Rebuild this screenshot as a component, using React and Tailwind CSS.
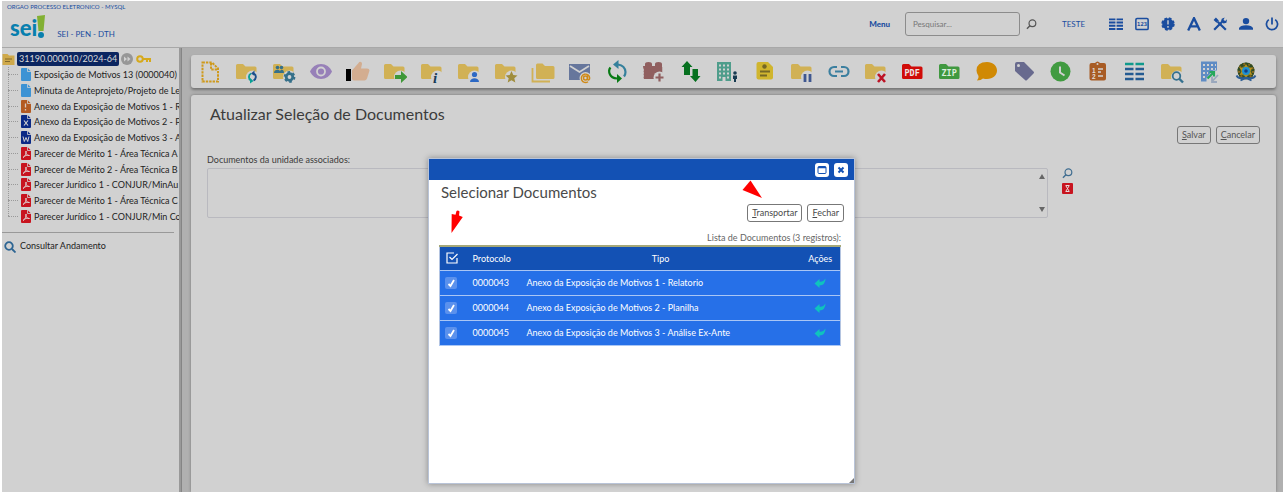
import React from "react";

const FOLDER = "M1 5.5Q1 4 2.500 4H8l2.500 2.500h9.500q1.500 0 1.500 1.500v9.500q0 1.500-1.500 1.500H2.500Q1 19 1 17.500z";

function Svg({ size = 24, children }) {
  return (
    <svg viewBox="0 0 24 24" width={size} height={size} aria-hidden="true" className="block shrink-0" fill="none">
      {children}
    </svg>
  );
}

function Folder({ children }) {
  return (
    <Svg>
      <path d={FOLDER} fill="#d1b155" />
      <circle cx="17.500" cy="17" r="6.500" fill="#d1d1d1" />
      {children}
    </Svg>
  );
}

function Brazil() {
  return (
    <Svg>
      <path d="M12 2.500 18 4.500l2.500 5-2 8h-13l-2-8L6 4.500z" fill="#5c6a2c" />
      <circle cx="12" cy="11" r="7" stroke="#2f4a24" strokeWidth="3" />
      <circle cx="12" cy="11" r="7" stroke="#8a6a1c" strokeWidth="2" strokeDasharray="2 3" />
      <path d="M12 4l2.200 3.800 4.300-.3-2.200 3.700 2.200 3.800-4.300-.4L12 18.500l-2.200-3.900-4.300.4 2.200-3.800-2.200-3.700 4.300.3z" fill="#b8921c" />
      <circle cx="12" cy="11" r="4" fill="#1f8fd0" />
      <circle cx="12" cy="11" r="1.800" fill="#123f86" />
      <path d="M2.500 15.500c2 4 6 3 9.500 2 3.500 1 7.500 2 9.500-2M6.500 20.500l5.500-2.500 5.500 2.500" stroke="#2c5c94" strokeWidth="1.800" />
    </Svg>
  );
}

const tools = [
  ["Incluir Documento", <Svg><path d="M4.500 2.500H14l6 6V21.500H4.500zM13 3v6.500h6.500" stroke="#cf9a1c" strokeWidth="2" strokeDasharray="2.400 1" /></Svg>],
  ["Iniciar Processo Relacionado", <Folder><path d="M16 13.500a4 4 0 0 0 0 7" stroke="#0aa095" strokeWidth="1.900" /><path d="m15 18 3.500 3L15 23.500z" fill="#0aa095" /><path d="M18.500 20.500a4 4 0 0 0 .5-7" stroke="#1c4f8c" strokeWidth="1.900" /><path d="M19.500 10.500v5.500L16 13.500z" fill="#1c4f8c" /></Folder>],
  ["Gerenciar Processo", <Folder><circle cx="5.500" cy="7.500" r="1.800" fill="#35708a" /><circle cx="9.500" cy="7.500" r="1.800" fill="#35708a" /><path d="M2 13c0-4 5-4 6-2 1-2 4-2 4 2z" fill="#35708a" /><circle cx="17.500" cy="17" r="3.300" stroke="#35708a" strokeWidth="2.800" /><circle cx="17.500" cy="17" r="5" stroke="#35708a" strokeWidth="1.800" strokeDasharray="2.600 2.636" /></Folder>],
  ["Acompanhamento", <Svg><path d="M1 11.500C3 7 7 4 12 4s9 3 11 7.500C21 16 17 19 12 19S3 16 1 11.500z" fill="#9780b8" /><circle cx="12" cy="11.500" r="4" stroke="#d1d1d1" strokeWidth="1.800" /></Svg>],
  ["Ciência", <Svg><path d="M0 9h5v12H0z" fill="#000" /><path d="M6 10.500 12.500 3c1-2 3.500-1.500 3.500 1l-1 4.500h6q2.500 0 2.500 2l-2.500 8q-.7 2-2.500 2H8q-2 0-2-2z" fill="#d3ad90" /></Svg>],
  ["Enviar Processo", <Folder><path d="M12 15h6v-4l6.500 6-6.500 6v-4h-6z" fill="#3f9838" /></Folder>],
  ["Atualizar Andamento", <Folder><text x="13" y="22.500" fontFamily="Liberation Serif, serif" fontSize="15" fontWeight="bold" fontStyle="italic" fill="#173a56">i</text></Folder>],
  ["Atribuir Processo", <Folder><circle cx="17.500" cy="14.500" r="2.600" fill="#2c68c4" /><path d="M13 22c0-5 9-5 9 0z" fill="#2c68c4" /></Folder>],
  ["Acompanhamento Especial", <Folder><path d="m17.500 11 1.800 4 4.200.4-3.200 2.900 1 4.200-3.800-2.200-3.800 2.200 1-4.200-3.200-2.900 4.200-.4z" fill="#a08d3c" /></Folder>],
  ["Duplicar Processo", <Svg><path d="M1.500 8v13.500H19" stroke="#d1b155" strokeWidth="1.800" /><path d="M5 5q0-1.500 1.500-1.500h5l2.500 2.500h8q1.500 0 1.500 1.500v10q0 1.500-1.500 1.500h-15.500q-1.500 0-1.500-1.500z" fill="#d1b155" /></Svg>],
  ["Enviar Correspondência", <Svg><path d="M1 4h21v16H1z" fill="#66769c" /><path d="m2 6 9.500 6L21 6" stroke="#d1d1d1" strokeWidth="1.800" /><circle cx="17.500" cy="18" r="6" fill="#d1d1d1" /><circle cx="17.500" cy="18" r="2" stroke="#d08a18" strokeWidth="1.500" /><path d="M19.500 15.500v3q0 1.500 1.200 1.500 1-.2 1-2a4.200 4.200 0 1 0-1.700 3.700" stroke="#d08a18" strokeWidth="1.400" /></Svg>],
  ["Relacionamentos", <Svg><path d="M13 4.500q7 1 7.500 7.500 0 2.500-1.500 4.500" stroke="#35809c" strokeWidth="2.200" /><path d="M13.500 0v9L8 4.500z" fill="#35809c" /><path d="M5.500 7.500q-2.500 3-.5 7 1.500 3.500 7 4" stroke="#087a14" strokeWidth="2.200" /><path d="M12 14v9l5-4.500z" fill="#087a14" /></Svg>],
  ["Incluir em Bloco", <Svg><path d="M1 6h2V4q0-2 3.500-2T10 4v2h3V4q0-2 3.500-2T20 4v3q1 1 0 2 1 1 0 2 1 1 0 2v6H2q-1-2 0-3-1-2 0-3-1-2 0-3-1-2-1-4z" fill="#905f5f" /><circle cx="17.500" cy="17.500" r="6" fill="#d1d1d1" /><path d="M17.500 13.500v8M13.500 17.500h8" stroke="#905f5f" strokeWidth="2.200" /></Svg>],
  ["Tramitar", <Svg><path d="m8 1 5.500 6H11v8H5V7H2.500zM16.500 22 11 16h2.500V9h5.500v7h2.500z" fill="#06701f" /></Svg>],
  ["Ver Órgãos", <Svg><path d="M1 2h14v19H1z" fill="#4f9d8b" /><path d="M3 5.500h10M3 9.500h10M3 13.500h10M3 17.500h2M11 17.500h2" stroke="#d1d1d1" strokeWidth="2" strokeDasharray="2 2" /><path d="M6.500 17h3v4h-3z" fill="#d1d1d1" /><circle cx="19" cy="13" r="1.800" fill="#173a50" /><path d="M17 15.500h4V19h-1v3h-2v-3h-1z" fill="#173a50" /></Svg>],
  ["Anotações", <Svg><path d="M3.500 4q0-2 2-2H15l5 5v10.500q0 2-2 2H5.500q-2 0-2-2z" fill="#d0b52e" /><circle cx="11.500" cy="6.500" r="2.200" fill="#746726" /><path d="M7 11.500h10M7 15.500h7" stroke="#746726" strokeWidth="1.800" /></Svg>],
  ["Sobrestar Processo", <Folder><path d="M15 14v8M20 14v8" stroke="#3f5790" strokeWidth="2.800" /></Folder>],
  ["Anexar Processo", <Svg><path d="M10 7H7a4.500 4.500 0 0 0 0 9h3M14 7h3a4.500 4.500 0 0 1 0 9h-3M8 11.500h8" stroke="#3b7f9f" strokeWidth="2.200" /></Svg>],
  ["Concluir Processo", <Folder><path d="m14 14 7 8M21 14l-7 8" stroke="#bd1426" strokeWidth="2.600" /></Folder>],
  ["Gerar PDF", <Svg><path d={FOLDER} fill="#d00b08" /><text x="3.500" y="15.500" fontFamily="DejaVu Sans Mono, monospace" fontSize="8.500" fontWeight="bold" fill="#ece4e4">PDF</text></Svg>],
  ["Gerar ZIP", <Svg><path d={FOLDER} fill="#409840" /><text x="3.500" y="15.500" fontFamily="DejaVu Sans Mono, monospace" fontSize="8.500" fontWeight="bold" fill="#dcecdc">ZIP</text></Svg>],
  ["Comentários", <Svg><path d="M12 2c6 0 10 4 10 8.500S18 19 12 19q-2 0-4-.6Q6 20.500 2 20.500q2-2 1.500-4.500Q1.500 13 1.500 10.500 1.500 2 12 2z" fill="#d08904" /></Svg>],
  ["Marcadores", <Svg><path d="M3 4q0-2 2-2h7l9.500 9.500q1 1 0 2L15 20q-1 1-2 0L3 11z" fill="#686a8e" /><circle cx="6.500" cy="5.500" r="1.500" fill="#d1d1d1" /></Svg>],
  ["Controle de Prazos", <Svg><circle cx="11.500" cy="11.500" r="10" fill="#419b41" /><path d="M11 6.500v6l4.500 3" stroke="#d1d1d1" strokeWidth="2" /></Svg>],
  ["Lista de Tarefas", <Svg><path d="M3.500 5q0-2 2-2H9q2.500-3 5 0h4q2 0 2 2v13.500q0 2-2 2H5.500q-2 0-2-2z" fill="#a85c25" /><circle cx="11.500" cy="4" r="1" fill="#d1d1d1" /><path d="M12 9h5M12 12h3M12 16h5" stroke="#d1d1d1" strokeWidth="1.500" /><text x="6" y="12.500" fontFamily="Liberation Sans, sans-serif" fontSize="6.500" fontWeight="bold" fill="#e4dcd6">1</text><text x="6" y="18.500" fontFamily="Liberation Sans, sans-serif" fontSize="6.500" fontWeight="bold" fill="#e4dcd6">2</text></Svg>],
  ["Controle de Processos", <Svg><path d="M2 4h8.500M12.500 4H21" stroke="#109a8d" strokeWidth="2.600" /><path d="M2 9h8.500M12.500 9H21M2 14h8.500M12.500 14H21M2 19h8.500M12.500 19H21" stroke="#245b92" strokeWidth="2.600" /></Svg>],
  ["Pesquisar no Processo", <Folder><circle cx="16.500" cy="16" r="3.800" stroke="#35718f" strokeWidth="1.800" /><path d="m19 18.500 4 4" stroke="#35718f" strokeWidth="2.400" /></Folder>],
  ["Envio Externo", <Svg><path d="M4 1.500h16v20H4z" fill="#5f8cc4" /><path d="M6 5h13M6 9h13M6 13h5M6 17h3" stroke="#d1d1d1" strokeWidth="2" strokeDasharray="2 2" /><path d="M9.500 22V18L16 10.500h8V22z" fill="#d1d1d1" /><path d="m10.500 18.500 6-6M12.500 12h4.500v4.500" stroke="#25a85c" strokeWidth="2.200" /><path d="m21 15-5.500 6M15 16.500V22h5" stroke="#9aa8bd" strokeWidth="1.800" /></Svg>],
  ["Brasão da República", <Brazil />],
];

const documents = [
  ["Exposição de Motivos 13 (0000040)", "doc"],
  ["Minuta de Anteprojeto/Projeto de Le", "doc"],
  ["Anexo da Exposição de Motivos 1 - R", "alert"],
  ["Anexo da Exposição de Motivos 2 - P", "sheet"],
  ["Anexo da Exposição de Motivos 3 - A", "word"],
  ["Parecer de Mérito 1 - Área Técnica A", "pdf"],
  ["Parecer de Mérito 2 - Área Técnica B", "pdf"],
  ["Parecer Jurídico 1 - CONJUR/MinAu", "pdf"],
  ["Parecer de Mérito 1 - Área Técnica C", "pdf"],
  ["Parecer Jurídico 1 - CONJUR/Min Co", "pdf"],
];

const docColors = { doc: "#3d93d4", alert: "#b35a22", sheet: "#0b2a86", word: "#0b2a86", pdf: "#c8141f" };

function DocIcon({ kind }) {
  return (
    <svg viewBox="0 0 10 13" className="block h-[13px] w-[10px] shrink-0" fill="none" aria-hidden="true">
      <path d="M0 1q0-1 1-1h5.500L10 3.500V12q0 1-1 1H1q-1 0-1-1z" fill={docColors[kind]} />
      <path d="M6.500 0v3.500H10" stroke="#d1d1d1" strokeWidth=".8" />
      {kind === "alert" && <path d="M4.500 3.500v4M4.500 9v1.500" stroke="#d8c8c0" strokeWidth="1.300" />}
      {kind === "sheet" && <path d="m3 5.500 4 5M7 5.500l-4 5" stroke="#d1d1d1" strokeWidth="1.200" />}
      {kind === "word" && <path d="m2 5.500 1.300 5L5 6.500l1.700 4 1.300-5" stroke="#d1d1d1" />}
      {kind === "pdf" && <path d="M2 10.500c2-1 3.500-4 3-6.500-.8 3 1.500 4.800 3.500 4.500C6 7.800 4 8.500 2 10.500z" stroke="#e0d0d0" strokeWidth=".9" />}
    </svg>
  );
}

function Magnifier({ className }) {
  return (
    <svg viewBox="0 0 12 12" className={className} fill="none" stroke="currentColor" aria-hidden="true">
      <circle cx="7" cy="4.700" r="3.700" strokeWidth="1.300" />
      <path d="M4.300 7.300 1 10.700" strokeWidth="1.500" />
    </svg>
  );
}

const headerActions = [
  ["Controle de Processos", <Svg size={14}><path d="M0 4h11M13 4h11M0 9.500h11M13 9.500h11M0 15h11M13 15h11M0 20.500h11M13 20.500h11" stroke="currentColor" strokeWidth="3.200" /></Svg>],
  ["Painel de Controle", <Svg size={14}><rect x="1.500" y="2.500" width="21" height="19" rx="2" stroke="currentColor" strokeWidth="2.600" /><text x="3.600" y="16" fontFamily="DejaVu Sans Mono, monospace" fontSize="9.500" fontWeight="bold" fill="currentColor">123</text></Svg>],
  ["Novidades", <Svg size={14}><circle cx="12" cy="12" r="10" fill="currentColor" /><circle cx="12" cy="12" r="9.500" stroke="currentColor" strokeWidth="4" strokeDasharray="4.500 3" /><path d="M12 5.500v7.500M12 15.500v3" stroke="#d1d1d1" strokeWidth="2.400" /></Svg>],
  ["Acessibilidade", <Svg size={14}><path d="M2 23 12 2l10 21M6 16h12" stroke="currentColor" strokeWidth="4" /></Svg>],
  ["Configurações", <Svg size={14}><path d="m2 22 15-15M8 8l14 14" stroke="currentColor" strokeWidth="3.800" /><path d="M1 5 5 1l5 5-4 4zM15 3l5-2-2 4 3 2 3-3-1 6-5 1-4-4z" fill="currentColor" /></Svg>],
  ["Usuário", <Svg size={14}><circle cx="12" cy="7" r="5.500" fill="currentColor" /><path d="M0 22v-3q2-5 12-5t12 5v3z" fill="currentColor" /></Svg>],
  ["Sair", <Svg size={14}><path d="M12 1v12" stroke="currentColor" strokeWidth="3" /><path d="M6.500 4.500a9.500 9.500 0 1 0 11 0" stroke="currentColor" strokeWidth="3" /></Svg>],
];

const rows = [
  ["0000043", "Anexo da Exposição de Motivos 1 - Relatorio"],
  ["0000044", "Anexo da Exposição de Motivos 2 - Planilha"],
  ["0000045", "Anexo da Exposição de Motivos 3 - Análise Ex-Ante"],
];

function TextButton({ label, className }) {
  return (
    <button type="button" className={`rounded-[3px] border border-[#777] px-1 text-[9px] leading-4 ${className}`}>
      <span className="underline">{label[0]}</span>{label.slice(1)}
    </button>
  );
}

function Header() {
  return (
    <header className="flex h-[47px] justify-between border-b border-[#a8a8a8] bg-[#d1d1d1] pr-1 text-[#1a4d9f]">
      <div className="pl-[5px] pt-px">
        <p className="text-[6px] leading-[10px]">ORGAO PROCESSO ELETRONICO - MYSQL</p>
        <div className="flex items-end pl-[3px] pt-[3px]">
          <div className="flex items-end">
            <span className="text-[22px] font-black leading-[22px] text-[#087fae]">sei</span>
            <svg viewBox="0 0 8 24" className="h-6 w-2" aria-hidden="true">
              <path d="M0 1 8 0 6.500 16H1.500z" fill="#82b033" />
              <circle cx="4" cy="20" r="3" fill="#087fae" />
            </svg>
          </div>
          <span className="pl-3 text-[8px] leading-[10px]">SEI - PEN - DTH</span>
        </div>
      </div>
      <div className="flex items-center">
        <a href="#menu" className="mr-[15px] text-[8px] font-black">Menu</a>
        <input aria-label="Pesquisar" placeholder="Pesquisar..." className="h-6 w-[115px] rounded-[3px] border border-[#8c8c8c] bg-transparent px-[7px] text-[8px] placeholder:text-[#777]" />
        <button type="button" aria-label="Pesquisar" className="ml-[6px] text-[#555]"><Magnifier className="size-[11px]" /></button>
        <span className="ml-[25px] w-[47px] text-[8px]">TESTE</span>
        <nav className="flex gap-3">
          {headerActions.map(([name, icon]) => (
            <button type="button" key={name} aria-label={name}>{icon}</button>
          ))}
        </nav>
      </div>
    </header>
  );
}

function Sidebar() {
  return (
    <aside className="w-[177px] shrink-0 overflow-hidden bg-[#d1d1d1] pt-[3px] text-[9px] text-[#222]">
      <div className="flex h-4 items-center">
        <svg viewBox="0 0 12 12" className="h-3 w-[13px]" aria-hidden="true">
          <path d="M0 1h5l1.500 1.500H12V12H0z" fill="#cfa94a" />
          <path d="M2.500 6h7M2.500 8.500h5" stroke="#82692b" />
        </svg>
        <a href="#processo" className="ml-[2px] rounded-[2px] bg-[#0b2560] px-[2px] leading-[14px] text-[#d8d8d8]">31190.000010/2024-64</a>
        <svg viewBox="0 0 12 12" className="ml-[2px] size-3" aria-hidden="true">
          <circle cx="6" cy="6" r="6" fill="#979797" />
          <path d="m3 3.500 3 2.500-3 2.500zM6.500 3.500l3 2.500-3 2.500z" fill="#d1d1d1" />
        </svg>
        <svg viewBox="0 0 15 10" className="ml-[3px] h-[10px] w-[15px]" fill="none" stroke="#d6a91b" strokeWidth="2" aria-hidden="true">
          <circle cx="4" cy="5" r="2.800" />
          <path d="M7 5h7v3M11 5v3" />
        </svg>
      </div>
      <ul className="relative ml-[6px] grid h-[157px] auto-rows-fr">
        <li aria-hidden="true" className="absolute bottom-2 left-0 top-0 border-l border-dotted border-[#999]" />
        {documents.map(([name, kind]) => (
          <li key={name + kind} className="flex items-center whitespace-nowrap">
            <span className="mr-[3px] w-[10px] shrink-0 border-t border-dotted border-[#999]" />
            <DocIcon kind={kind} />
            <a href="#documento" className="pl-[3px] leading-[15px]">{name}</a>
          </li>
        ))}
      </ul>
      <hr className="mr-[5px] mt-2 border-[#999]" />
      <a href="#andamento" className="mt-[5px] flex items-center gap-1 pl-[2px] leading-[14px]">
        <svg viewBox="0 0 12 12" className="mt-[3px] size-3" fill="none" stroke="#2d6593" strokeWidth="1.800" aria-hidden="true">
          <circle cx="5" cy="5" r="3.800" /><path d="m8 8 3.500 3.500" />
        </svg>
        Consultar Andamento
      </a>
    </aside>
  );
}

function Dialog() {
  return (
    <section role="dialog" aria-label="Selecionar Documentos" className="absolute left-1/3 top-[157px] -ml-px flex h-[326px] w-[427px] flex-col border border-[#b9c4d8] bg-white text-[#4a4a4a] shadow-[0_0_6px_rgba(0,0,0,0.35)]">
      <div className="flex h-[21px] items-center justify-end gap-[5px] bg-[#1351b4] pr-[6px]">
        <button type="button" aria-label="Maximizar" className="rounded-[3px] bg-white text-[#1351b4]">
          <svg viewBox="0 0 14 14" className="size-[14px]" fill="none" stroke="currentColor" aria-hidden="true"><rect x="3" y="3.500" width="8" height="7" rx="1" /><path d="M3 4.500h8" strokeWidth="1.500" /></svg>
        </button>
        <button type="button" aria-label="Fechar janela" className="rounded-[3px] bg-white text-[#1351b4]">
          <svg viewBox="0 0 14 14" className="size-[14px]" stroke="currentColor" strokeWidth="2" aria-hidden="true"><path d="m4.500 4.500 5 5M9.500 4.500l-5 5" /></svg>
        </button>
      </div>
      <h2 className="pl-3 pt-px text-[15px] leading-[23px]">Selecionar Documentos</h2>
      <div className="flex justify-end gap-[5px] pr-[10px]">
        <TextButton label="Transportar" className="bg-white" />
        <TextButton label="Fechar" className="bg-white" />
      </div>
      <div className="pl-[10px] pr-[13px] pt-[9px]">
        <table className="w-full table-fixed border-collapse border border-[#b4c4e0] text-[9px] text-white">
          <caption className="text-right leading-[14px] text-[#666]">Lista de Documentos (3 registros):</caption>
          <colgroup><col className="w-[25px]" /><col className="w-[56px]" /><col /><col className="w-[40px]" /></colgroup>
          <thead>
            <tr className="h-6 border-t-2 border-[#a5a878] bg-[#1351b4]">
              <th className="p-0">
                <button type="button" aria-label="Selecionar todos" className="ml-[6px] block">
                  <svg viewBox="0 0 12 12" className="size-3" fill="none" stroke="#fff" strokeWidth="1.200" aria-hidden="true"><path d="M8 1H1v10h10V6" /><path d="m3.500 5 2.500 2.500L11.500 2" /></svg>
                </button>
              </th>
              <th className="p-0 pl-2 text-left font-normal">Protocolo</th>
              <th className="p-0 font-normal">Tipo</th>
              <th className="p-0 font-normal">Ações</th>
            </tr>
          </thead>
          <tbody>
            {rows.map(([id, name]) => (
              <tr key={id} className="h-[25px] border-y border-[#a9c6f5] bg-[#2670e8]">
                <td className="p-0">
                  <label className="relative ml-[5px] block size-3">
                    <input type="checkbox" defaultChecked aria-label={id} className="peer block size-3 appearance-none rounded-[2px] bg-[#5b91ed]" />
                    <svg viewBox="0 0 12 12" className="pointer-events-none absolute inset-0 hidden size-3 peer-checked:block" fill="none" stroke="#fff" strokeWidth="1.800" aria-hidden="true"><path d="M3.500 7 5.500 9 9 3" /></svg>
                  </label>
                </td>
                <td className="p-0 pl-2">{id}</td>
                <td className="p-0 pl-[6px]">{name}</td>
                <td className="p-0">
                  <button type="button" aria-label="Transportar" className="mx-auto block">
                    <svg viewBox="0 0 12 10" className="h-[10px] w-3" aria-hidden="true"><path d="M.5 5.500 5.500 1v2.500Q9 4.500 11.500.5 11.500 7 5.500 7.500V10z" fill="#0fc3bd" /></svg>
                  </button>
                </td>
              </tr>
            ))}
          </tbody>
        </table>
      </div>
      <svg viewBox="0 0 5 5" className="absolute bottom-0 right-0 size-[5px]" aria-hidden="true"><path d="M5 0v5H0z" fill="#777" /></svg>
      <svg viewBox="0 0 12 24" className="absolute left-[22px] top-[51px] h-6 w-3" aria-hidden="true"><path d="M.7 4 4.500 4.800 5.500 1Q7 0 8.500 1.500L8 5.500l3.800 1.500L.5 23z" fill="#f00" /></svg>
      <svg viewBox="0 0 20 18" className="absolute left-[313px] top-[21px] h-[18px] w-5" aria-hidden="true"><path d="M8.500.5 20 18 .5 10z" fill="#f00" /></svg>
    </section>
  );
}

export default function App() {
  return (
    <div className="relative flex min-h-screen flex-col border-l-2 border-t border-white bg-[#b0b0b0] font-['Lato',sans-serif]">
      <Header />
      <div className="flex flex-1">
        <Sidebar />
        <div className="w-[3px] shrink-0 border-r border-[#858585] bg-[#999]" />
        <main className="flex min-w-0 flex-1 flex-col gap-[7px] pl-[9px] pr-[7px] pt-[7px]">
          <div className="flex h-[33px] shrink-0 items-center gap-[13px] rounded-[3px] bg-[#d1d1d1] pl-[7px] shadow-[0_2px_3px_rgba(0,0,0,0.35)]">
            {tools.map(([name, icon]) => (
              <button type="button" key={name} aria-label={name} className="shrink-0">{icon}</button>
            ))}
          </div>
          <section className="flex-1 rounded-t-[3px] bg-[#d1d1d1] pl-4 pt-[7px] text-[#3c3c3c] shadow-[0_0_3px_rgba(0,0,0,0.35)]">
            <h1 className="pl-[3px] text-[16px] leading-6">Atualizar Seleção de Documentos</h1>
            <div className="flex justify-end gap-[5px] pr-4 text-[#555]">
              <TextButton label="Salvar" className="bg-[#d1d1d1]" />
              <TextButton label="Cancelar" className="bg-[#d1d1d1]" />
            </div>
            <label htmlFor="documentos" className="mt-2 block text-[9px] leading-4">Documentos da unidade associados:</label>
            <div className="flex pr-[203px]">
              <div className="flex h-[50px] flex-1 rounded-[2px] border border-[#b9b9bf]">
                <select id="documentos" multiple className="h-full min-w-0 flex-1 appearance-none bg-transparent" />
                <div className="flex w-[10px] flex-col items-center justify-between py-[5px]">
                  <svg viewBox="0 0 6 5" className="h-[5px] w-[6px]" aria-hidden="true"><path d="M3 0 6 5H0z" fill="#666" /></svg>
                  <svg viewBox="0 0 6 5" className="h-[5px] w-[6px]" aria-hidden="true"><path d="M3 5 6 0H0z" fill="#666" /></svg>
                </div>
              </div>
              <div className="flex w-[25px] flex-col items-end gap-1">
                <button type="button" aria-label="Pesquisar documentos" className="text-[#3f6d90]"><Magnifier className="size-[11px]" /></button>
                <button type="button" aria-label="Remover documentos" className="rounded-[1px] bg-[#c8141f]">
                  <svg viewBox="0 0 11 11" className="size-[11px]" stroke="#e8dada" aria-hidden="true"><path d="M3.500 2.500h4M3.500 8.500h4M4 3l3 5M7 3 4 8" /></svg>
                </button>
              </div>
            </div>
          </section>
        </main>
      </div>
      <Dialog />
    </div>
  );
}
